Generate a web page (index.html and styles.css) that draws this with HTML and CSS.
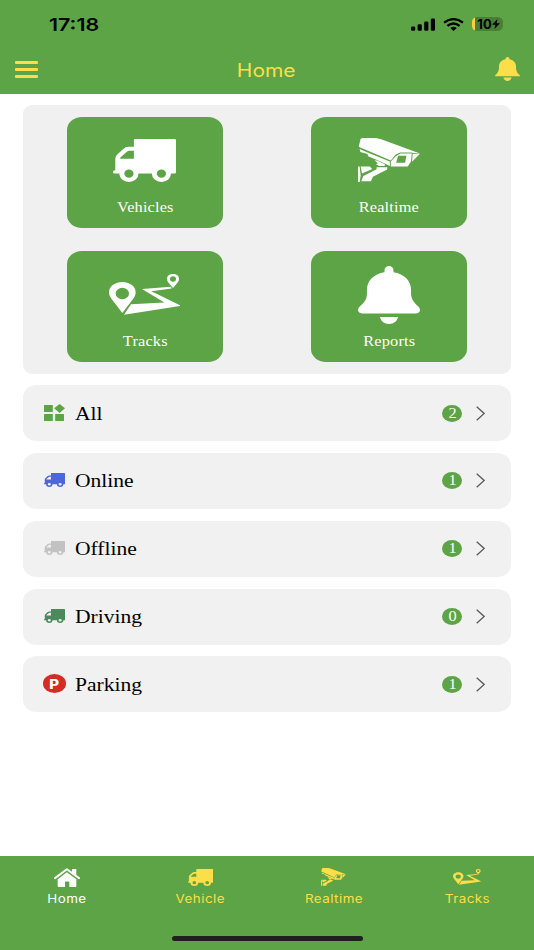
FILE: index.html
```html
<!DOCTYPE html>
<html lang="en">
<head>
    <meta charset="UTF-8">
    <meta name="viewport" content="width=device-width, initial-scale=1.0">
    <title>Home</title>
    <link rel="stylesheet" href="styles.css">
</head>
<body>
    <!-- shared icons -->
    <svg class="sprite" width="0" height="0">
        <symbol id="truck" viewBox="0 0 190 128" preserveAspectRatio="none">
            <path fill-rule="evenodd" d="M66 0H186Q190 0 190 4V99Q190 103 186 103H175A29 25 0 0 1 117 103H77A29 25 0 0 1 19 103H5Q0 103 0 98Q0 93 7 92V59Q7 52 12 47L31 30Q38 23 47 23H63V3Q63 0 66 0ZM22 59H63V35H49Q45 35 42 38L22 55ZM34 103A14 12 0 0 0 62 103A14 12 0 0 0 34 103ZM132 103A14 12 0 0 0 160 103A14 12 0 0 0 132 103Z"/>
        </symbol>
        <symbol id="camera" viewBox="0 0 187 131" preserveAspectRatio="none">
            <path d="M8 2L14 0H54L70 4L187 46L184 47L160 43L127 43L113 50L99 67L2 26Z"/>
            <path fill-rule="evenodd" d="M128 46H162L160 69L150 85H99V70L114 54ZM121 53L115 74H142L146 53Z"/>
            <path d="M165 47L186 48L163 71Z"/>
            <path d="M5 33L29 43L96 70V83L63 68L32 55L28 48L7 42Z"/>
            <path d="M50 66L60 68L81 78L80 83L64 83L54 78L60 76Z"/>
            <path d="M56 87H88V94L45 115L39 129H10L16 113L56 93Z"/>
            <path d="M0 85H5L8 112L5 131H0Z"/>
            <path d="M8 85H36L43 92L12 106Z"/>
        </symbol>
        <symbol id="route" viewBox="0 0 213 122" preserveAspectRatio="none">
            <path fill-rule="evenodd" d="M40 116L9 76C-14 48 11 24 40 24S94 48 71 76ZM20 58A20 17 0 0 0 60 58A20 17 0 0 0 20 58Z"/>
            <path fill-rule="evenodd" d="M192 42L178 25C168 12 177 0 192 0S216 12 206 25ZM183 15A9 8 0 0 0 201 15A9 8 0 0 0 183 15Z"/>
            <path d="M186 38L188 43L127 51L213 93V95L45 121L66 90L166 85L99 45Z"/>
        </symbol>
        <symbol id="bell" viewBox="0 0 187 175" preserveAspectRatio="none">
            <path d="M80 19V12A13.500 12 0 0 1 107 12V19C140 24 160 45 160 72V83C160 100 170 112 182 122Q187 127 187 133Q186 143 175 143H12Q1 143 0 133Q0 127 5 122C20 110 27 100 27 83V72C27 45 47 24 80 19Z"/>
            <path d="M66 154H121Q116 175 93.500 175T66 154Z"/>
        </symbol>
        <symbol id="bell-small" viewBox="0 0 75 71" preserveAspectRatio="none">
            <path d="M31 7Q32 0 37.500 0T44 7C57 10 63 19 63 28C63 41 66 47 74 53Q76 57 72 57H3Q-1 57 1 53C9 47 12 41 12 28C12 19 18 10 31 7Z"/>
            <path d="M25 61H50Q47 71 37.500 71T25 61Z"/>
        </symbol>
        <symbol id="house" viewBox="0 0 78 58" preserveAspectRatio="none">
            <path d="M3 31L38.500 4L75 31" fill="none" stroke="currentColor" stroke-width="6" stroke-linecap="round" stroke-linejoin="round"/>
            <path d="M54 3H67V24L54 14Z"/>
            <path d="M11 34L38.500 13L67 34V55Q67 58 64 58H46V41H33V58H14Q11 58 11 55Z"/>
        </symbol>
        <symbol id="chevron" viewBox="0 0 9 15">
            <path d="M0.700 0.700L8.200 7.400L0.700 14.200" fill="none" stroke="#5c5c5c" stroke-width="1.400"/>
        </symbol>
    </svg>

    <header class="header">
        <div class="status">
            <span class="time"><span class="wide">17:18</span></span>
            <div class="status-icons">
                <svg class="signal" viewBox="0 0 24 13">
                    <rect x="0" y="8.500" width="4.200" height="4.200" rx="1.300"/>
                    <rect x="6.600" y="6.200" width="4.200" height="6.500" rx="1.300"/>
                    <rect x="13.200" y="3.400" width="4.200" height="9.300" rx="1.300"/>
                    <rect x="19.800" y="0.500" width="4.200" height="12.200" rx="1.300"/>
                </svg>
                <svg class="wifi" viewBox="0 0 20 13" preserveAspectRatio="none">
                    <path d="M1 4.600Q10 -2.400 19 4.600M4.200 7.900Q10 3 15.800 7.900" fill="none" stroke="#000" stroke-width="2.300"/>
                    <path d="M6.900 10Q10 7.600 13.100 10L10 12.900Z"/>
                </svg>
                <div class="battery">
                    <span class="battery-text">10</span>
                    <svg class="bolt" viewBox="0 0 8 10" preserveAspectRatio="none"><path d="M5.500 0L0 5.700H3.400L2.400 10L8 4.200H4.600Z"/></svg>
                </div>
            </div>
        </div>
        <div class="navbar">
            <div class="menu"><span></span><span></span><span></span></div>
            <h1><span class="wide">Home</span></h1>
            <svg class="nav-bell"><use href="#bell-small"/></svg>
        </div>
    </header>

    <main class="content">
        <section class="panel">
            <div class="tile"><svg class="tile-truck"><use href="#truck"/></svg><span class="wide">Vehicles</span></div>
            <div class="tile"><svg class="tile-camera"><use href="#camera"/></svg><span class="wide">Realtime</span></div>
            <div class="tile"><svg class="tile-route"><use href="#route"/></svg><span class="wide">Tracks</span></div>
            <div class="tile"><svg class="tile-bell"><use href="#bell"/></svg><span class="wide">Reports</span></div>
        </section>

        <section class="list">
            <div class="row">
                <div class="row-icon all">
                    <svg width="21" height="17" viewBox="0 0 62 51" preserveAspectRatio="none">
                        <rect x="0" y="3" width="26" height="21" rx="1.500"/>
                        <rect x="0" y="30" width="26" height="21" rx="1.500"/>
                        <rect x="33" y="30" width="26" height="21" rx="1.500"/>
                        <path d="M46 0L62 13L46 27L30 13Z"/>
                    </svg>
                </div>
                <span class="label wide">All</span>
                <span class="badge"><span class="wide">2</span></span>
                <svg class="chevron"><use href="#chevron"/></svg>
            </div>
            <div class="row">
                <div class="row-icon online"><svg class="row-truck"><use href="#truck"/></svg></div>
                <span class="label wide">Online</span>
                <span class="badge"><span class="wide">1</span></span>
                <svg class="chevron"><use href="#chevron"/></svg>
            </div>
            <div class="row">
                <div class="row-icon offline"><svg class="row-truck"><use href="#truck"/></svg></div>
                <span class="label wide">Offline</span>
                <span class="badge"><span class="wide">1</span></span>
                <svg class="chevron"><use href="#chevron"/></svg>
            </div>
            <div class="row">
                <div class="row-icon driving"><svg class="row-truck"><use href="#truck"/></svg></div>
                <span class="label wide">Driving</span>
                <span class="badge"><span class="wide">0</span></span>
                <svg class="chevron"><use href="#chevron"/></svg>
            </div>
            <div class="row">
                <div class="row-icon"><span class="parking"><span class="wide">P</span></span></div>
                <span class="label wide">Parking</span>
                <span class="badge"><span class="wide">1</span></span>
                <svg class="chevron"><use href="#chevron"/></svg>
            </div>
        </section>
    </main>

    <footer class="footer">
        <nav class="tabs">
            <div class="tab active"><svg class="tab-house"><use href="#house"/></svg><span class="wide">Home</span></div>
            <div class="tab"><svg class="tab-truck"><use href="#truck"/></svg><span class="wide">Vehicle</span></div>
            <div class="tab"><svg class="tab-camera"><use href="#camera"/></svg><span class="wide">Realtime</span></div>
            <div class="tab"><svg class="tab-route"><use href="#route"/></svg><span class="wide">Tracks</span></div>
        </nav>
        <div class="home-indicator"></div>
    </footer>
</body>
</html>
```
FILE: styles.css
```css
* {
    box-sizing: border-box;
}
body {
    margin: 0;
    height: 950px;
    display: flex;
    flex-direction: column;
    background: #fff;
    font-family: "Liberation Serif", serif;
    overflow: hidden;
}
svg {
    display: block;
    fill: currentColor;
}
.sprite {
    position: absolute;
}
/* all text is set a little wider than the font */
.wide {
    display: inline-block;
    transform: scaleX(1.165);
}

/* header */
.header {
    height: 93.5px;
    background: #5ca445;
    font-family: Inter, sans-serif;
}
.status {
    height: 46px;
    padding: 2px 31px 0 49px;
    display: flex;
    align-items: center;
    justify-content: space-between;
}
.time {
    font-size: 17.500px;
    font-weight: 600;
}
.time .wide {
    transform: scaleX(1.22);
    transform-origin: left;
}
.status-icons {
    display: flex;
    align-items: center;
    gap: 8px;
}
.signal {
    width: 24px;
    height: 13px;
}
.wifi {
    width: 21px;
    height: 13px;
}
.battery {
    width: 31px;
    height: 14px;
    border-radius: 5px;
    background: linear-gradient(90deg, #f9cf45 3px, #488136 3px);
    display: flex;
    align-items: center;
    justify-content: center;
    padding-left: 2px;
}
.battery-text {
    font-size: 13px;
    font-weight: 700;
    line-height: 14px;
}
.bolt {
    width: 8px;
    height: 10px;
}
.navbar {
    height: 47px;
    padding: 0 14px 0 15px;
    display: flex;
    align-items: center;
    justify-content: space-between;
    color: #fbde49;
}
.menu {
    width: 23px;
    display: flex;
    flex-direction: column;
    gap: 4.500px;
}
.menu span {
    height: 2.500px;
    border-radius: 1px;
    background: #fbde49;
}
h1 {
    margin: 1px 0 0;
    font-size: 18px;
    font-weight: 400;
}
.nav-bell {
    width: 25px;
    height: 24px;
    margin-top: -1px;
}

/* content */
.content {
    flex: 1;
    padding: 11.500px 23px 0;
}
.panel {
    height: 268.500px;
    padding: 12px 0;
    border-radius: 9px;
    background: #f0f0f0;
    display: grid;
    grid-template-columns: 1fr 1fr;
    row-gap: 23.500px;
    justify-items: center;
}
.tile {
    width: 156px;
    height: 110.500px;
    padding-bottom: 12px;
    border-radius: 15px / 13px;
    background: #5ca445;
    color: #fff;
    font-size: 14px;
    letter-spacing: 0.150px;
    line-height: 16px;
    display: flex;
    flex-direction: column;
    align-items: center;
    justify-content: flex-end;
}
.tile-truck {
    width: 63px;
    height: 43px;
    margin: 0 1px 18px 0;
}
.tile-camera {
    width: 62px;
    height: 44px;
    margin: 0 1px 18px 0;
}
.tile-route {
    width: 71px;
    height: 41px;
    margin: 0 1px 19px 0;
}
.tile-bell {
    width: 62px;
    height: 58px;
    margin-bottom: 10px;
}
.list {
    margin-top: 11.700px;
    display: flex;
    flex-direction: column;
    gap: 11.800px;
}
.row {
    height: 56px;
    padding: 0 26px 0 20px;
    border-radius: 14px / 12px;
    background: #f1f1f1;
    display: flex;
    align-items: center;
}
.row-icon {
    width: 32px;
    padding-left: 1px;
}
.all svg {
    margin-top: -1px;
}
.row-truck {
    width: 21px;
    height: 14px;
    margin-top: -1px;
}
.all { color: #5ca445; }
.online { color: #4a67dc; }
.offline { color: #c2c2c2; }
.driving { color: #4a8a5c; }
.parking {
    width: 23px;
    height: 19px;
    margin: -1px 0 0 -1px;
    border-radius: 50%;
    background: #d32d26;
    color: #fff;
    display: flex;
    align-items: center;
    justify-content: center;
    font: 800 13px Inter, sans-serif;
}
.label {
    margin-top: 2px;
    font-size: 18.500px;
    transform-origin: left;
}
.badge {
    width: 20px;
    height: 17px;
    margin-left: auto;
    border-radius: 50%;
    background: #5ca445;
    color: #fff;
    font-size: 14px;
    line-height: 17px;
    text-align: center;
}
.chevron {
    width: 9px;
    height: 15px;
    margin-left: 14px;
}

/* bottom tabs */
.footer {
    height: 94.500px;
    padding-top: 12px;
    background: #5ca445;
    color: #fbde49;
    font-family: Inter, sans-serif;
    display: flex;
    flex-direction: column;
    justify-content: space-between;
    align-items: center;
}
.tabs {
    width: 100%;
    display: flex;
}
.tab {
    flex: 1;
    height: 39px;
    font-size: 11.500px;
    letter-spacing: 0.400px;
    line-height: 16px;
    display: flex;
    flex-direction: column;
    align-items: center;
    justify-content: space-between;
}
.active { color: #fff; }
.tab-house { width: 26px; height: 19px; }
.tab-truck { width: 25px; height: 17px; margin-top: 1px; }
.tab-camera { width: 25px; height: 18px; }
.tab-route { width: 28px; height: 16px; margin-top: 1px; }
.home-indicator {
    width: 191px;
    height: 5px;
    margin-bottom: 9px;
    border-radius: 3px;
    background: #202020;
}
```
